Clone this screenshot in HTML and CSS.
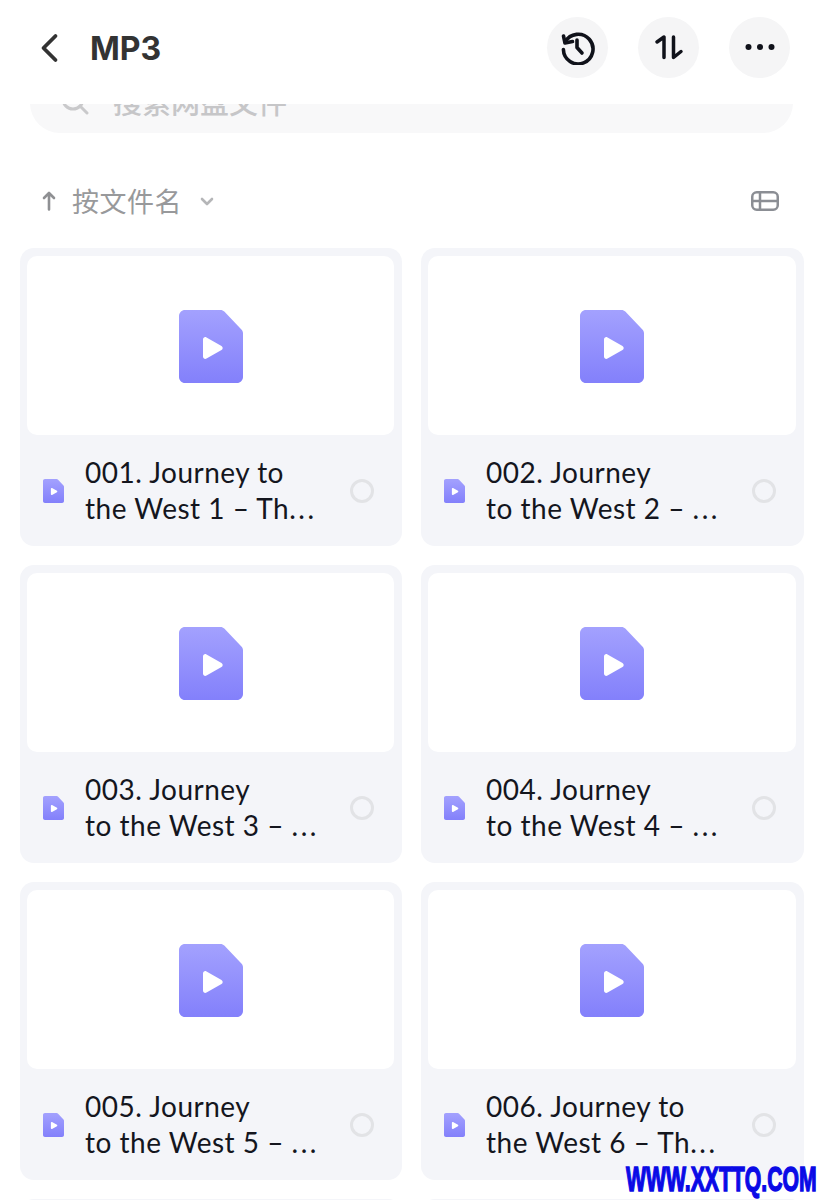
FILE: index.html
```html
<!DOCTYPE html>
<html lang="zh">
<head>
<meta charset="utf-8">
<title>MP3</title>
<link rel="stylesheet" href="styles.css">
</head>
<body>
<svg class="defs" width="0" height="0" aria-hidden="true">
  <defs>
    <linearGradient id="fileGrad" x1="0" y1="0" x2="0" y2="1">
      <stop offset="0" stop-color="#a3a1fe"/>
      <stop offset="1" stop-color="#8380fb"/>
    </linearGradient>
    <symbol id="file" viewBox="0 0 64 73">
      <path d="M6 0H41.500C43 0 44.300.6 45.300 1.600L62.400 19.400C63.400 20.400 64 21.800 64 23.200V67C64 70.300 61.300 73 58 73H6C2.700 73 0 70.300 0 67V6C0 2.700 2.700 0 6 0Z" fill="url(#fileGrad)"/>
      <path d="M24 29.500C24 27.600 25.900 26.500 27.500 27.400L42.500 35.900C44.100 36.800 44.100 39.200 42.500 40.100L27.500 48.600C25.900 49.500 24 48.400 24 46.500Z" fill="#fff"/>
    </symbol>
  </defs>
</svg>
<header class="topbar">
  <svg class="back" width="20" height="30" viewBox="0 0 20 30"><path d="M15.500 3 3.500 15 15.500 27" fill="none" stroke="#333" stroke-width="3.800" stroke-linecap="round" stroke-linejoin="round"/></svg>
  <h1 class="title">MP3</h1>
  <div class="actions">
    <button class="round">
      <svg width="36" height="36" viewBox="0 0 36 36" fill="none" stroke="#10121a" stroke-width="3.600" stroke-linecap="round" stroke-linejoin="round"><path d="M5.200 13A14.800 14.800 0 1 1 3.400 20.500"/><path d="M3.500 7 5 14 12.500 12.500"/><path d="M17 11V18.500L22 24"/></svg>
    </button>
    <button class="round">
      <svg width="34" height="34" viewBox="0 0 34 34" fill="none" stroke="#10121a" stroke-width="3.500" stroke-linecap="round" stroke-linejoin="round"><path d="M5 12 12 7V27.500"/><path d="M21.500 7V27.500L29 21.500"/></svg>
    </button>
    <button class="round">
      <svg width="32" height="10" viewBox="0 0 32 10" fill="#10121a"><circle cx="4.500" cy="5" r="3"/><circle cx="16" cy="5" r="3"/><circle cx="27.500" cy="5" r="3"/></svg>
    </button>
  </div>
</header>
<div class="search-clip">
  <div class="search">
    <svg width="30" height="30" viewBox="0 0 30 30" fill="none" stroke="#c9c9cb" stroke-width="3"><circle cx="13" cy="13" r="10"/><path d="M20 20 27 27" stroke-linecap="round"/></svg>
    <span class="search-text">搜索网盘文件</span>
  </div>
</div>
<div class="toolbar">
  <div class="sort">
    <svg width="16" height="24" viewBox="0 0 16 24" fill="none" stroke="#8f9093" stroke-width="2.600" stroke-linecap="round" stroke-linejoin="round"><path d="M8 20.500V4M3 9 8 4 13 9"/></svg>
    <span class="sort-label">按文件名</span>
    <svg class="caret" width="14" height="9" viewBox="0 0 14 9" fill="none" stroke="#b5b6b8" stroke-width="2.600" stroke-linecap="round" stroke-linejoin="round"><path d="M2 2 7 7 12 2"/></svg>
  </div>
  <svg class="view" width="28" height="20" viewBox="0 0 28 20" fill="none" stroke="#8b8e94" stroke-width="2.500" stroke-linejoin="round"><rect x="1.250" y="1.250" width="25.500" height="17.500" rx="4.500"/><path d="M1.250 10H26.750M9 1.250V18.750"/></svg>
</div>
<main class="grid">
  <article class="card">
    <div class="thumb"><svg class="file-lg"><use href="#file"/></svg></div>
    <div class="info">
      <svg class="file-sm"><use href="#file"/></svg>
      <p class="name">001. Journey to<br>the West 1 – Th<span class="dots">...</span></p>
      <span class="check"></span>
    </div>
  </article>
  <article class="card">
    <div class="thumb"><svg class="file-lg"><use href="#file"/></svg></div>
    <div class="info">
      <svg class="file-sm"><use href="#file"/></svg>
      <p class="name">002. Journey<br>to the West 2 – <span class="dots">...</span></p>
      <span class="check"></span>
    </div>
  </article>
  <article class="card">
    <div class="thumb"><svg class="file-lg"><use href="#file"/></svg></div>
    <div class="info">
      <svg class="file-sm"><use href="#file"/></svg>
      <p class="name">003. Journey<br>to the West 3 – <span class="dots">...</span></p>
      <span class="check"></span>
    </div>
  </article>
  <article class="card">
    <div class="thumb"><svg class="file-lg"><use href="#file"/></svg></div>
    <div class="info">
      <svg class="file-sm"><use href="#file"/></svg>
      <p class="name">004. Journey<br>to the West 4 – <span class="dots">...</span></p>
      <span class="check"></span>
    </div>
  </article>
  <article class="card">
    <div class="thumb"><svg class="file-lg"><use href="#file"/></svg></div>
    <div class="info">
      <svg class="file-sm"><use href="#file"/></svg>
      <p class="name">005. Journey<br>to the West 5 – <span class="dots">...</span></p>
      <span class="check"></span>
    </div>
  </article>
  <article class="card">
    <div class="thumb"><svg class="file-lg"><use href="#file"/></svg></div>
    <div class="info">
      <svg class="file-sm"><use href="#file"/></svg>
      <p class="name">006. Journey to<br>the West 6 – Th<span class="dots">...</span></p>
      <span class="check"></span>
    </div>
  </article>
  <article class="card"></article>
  <article class="card"></article>
</main>
<div class="watermark">WWW.XXTTQ.COM</div>
</body>
</html>
```
FILE: styles.css
```css
* { box-sizing: border-box; }
html, body { margin: 0; padding: 0; height: 1200px; overflow: hidden; background: #fff; }
body { position: relative; font-family: "Lato", "Noto Sans CJK SC", sans-serif; color: #14161e; }
.defs { position: absolute; }

.topbar { height: 104px; display: flex; align-items: center; padding: 0 33px 10px 40px; background: #fff; }
.back { flex: none; margin-top: 2px; }
.title { margin: 3px 0 0 30px; font: 700 32px/40px "Inter", sans-serif; color: #333; }
.actions { margin-left: auto; display: flex; gap: 30px; }
.round { width: 61px; height: 61px; padding: 0; border: 0; border-radius: 50%; background: #f5f5f6; display: flex; align-items: center; justify-content: center; }

.search-clip { height: 29px; margin: 0 30px; overflow: hidden; display: flex; align-items: flex-end; }
.search { flex: 1; height: 60px; border-radius: 30px; background: #f8f8f9; display: flex; align-items: center; gap: 23px; padding: 0 0 5px 30px; }
.search-text { font: 500 29px/34px "Noto Sans CJK SC", sans-serif; color: #c6c6c8; }

.toolbar { height: 115px; display: flex; align-items: center; justify-content: space-between; padding: 20px 44px 0 41px; }
.sort { display: flex; align-items: center; }
.sort-label { margin-left: 15px; font: 400 27px/34px "Noto Sans CJK SC", sans-serif; letter-spacing: 0.500px; color: #98999b; }
.caret { margin-left: 18px; margin-top: 2px; }
.view { display: block; }

.grid { height: 952px; overflow: hidden; display: grid; grid-template-columns: 382px 383px; grid-auto-rows: 298px; gap: 19px; padding: 0 19px 0 20px; }
.card { border-radius: 14px; background: #f4f5f9; padding: 8px 8px 0 7px; }
.thumb { height: 179px; border-radius: 10px; background: #fff; display: flex; align-items: center; justify-content: center; padding-top: 2px; }
.file-lg { width: 64px; height: 73px; display: block; }
.info { display: flex; align-items: center; height: 111px; padding: 0 0 0 16px; }
.file-sm { flex: none; width: 21px; height: 24px; display: block; }
.name { flex: 1; margin: -2px 0 0 21px; font-size: 28px; line-height: 36px; letter-spacing: 0.500px; white-space: nowrap; color: #14161e; }
.dots { letter-spacing: 2.500px; }
.check { flex: none; width: 24px; height: 24px; margin-right: 20px; border: 3px solid #e2e3e6; border-radius: 50%; }

.watermark { position: absolute; left: 626px; top: 1159px; font: 700 35px/40px "Liberation Sans", sans-serif; color: #0a0ae6; -webkit-text-stroke: 1.500px #0a0ae6; white-space: nowrap; transform: scaleX(0.605); transform-origin: left center; }
```
